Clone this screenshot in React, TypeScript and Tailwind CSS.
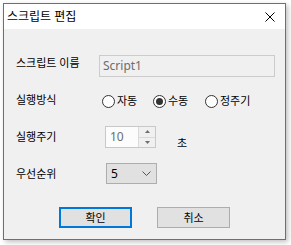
import React from "react";

function Radio({ checked, label, w }: { checked?: boolean; label: string; w: string }) {
  return (
    <div className={`flex items-center gap-[2px] ${w}`}>
      <div className="w-[13px] h-[13px] rounded-full border border-[#333333] bg-white flex items-center justify-center">
        {checked && <div className="w-[7px] h-[7px] rounded-full bg-[#333333]" />}
      </div>
      <span className="text-[11px] leading-[14px] text-black">{label}</span>
    </div>
  );
}

export default function App() {
  const font = "font-['Noto_Sans','Noto_Sans_CJK_KR',sans-serif]";
  return (
    <div className={`w-[291px] h-[245px] bg-white pt-[3px] pl-[3px] ${font}`}>
      <div className="w-[283px] h-[237px] border border-[#6f6f6f] bg-[#f0f0f0] shadow-[2px_2px_5px_rgba(0,0,0,0.25)] flex flex-col">
        {/* Title bar */}
        <div className="h-[25px] bg-white flex items-center justify-between pl-[3px] pr-[10px]">
          <span className="text-[12px] leading-[16px] text-black">스크립트 편집</span>
          <svg width="10" height="10" viewBox="0 0 10 10">
            <path d="M0.5 0.5 L9.5 9.5 M9.5 0.5 L0.5 9.5" stroke="#000" strokeWidth="1" fill="none" />
          </svg>
        </div>
        {/* Body */}
        <div className="flex flex-col pl-[12px]">
          {/* Row 1 */}
          <div className="mt-[26px] h-[22px] flex items-center">
            <span className="w-[83px] text-[11px] leading-[14px] text-black mb-[6px]">스크립트 이름</span>
            <div className="w-[176px] h-[22px] border border-[#cccccc] bg-[#f0f0f0] flex items-center pl-[3px]">
              <span className="text-[12px] leading-[14px] text-[#6d6d6d]">Script1</span>
            </div>
          </div>
          {/* Row 2 */}
          <div className="mt-[17px] h-[14px] flex items-center">
            <span className="w-[86px] text-[11px] leading-[14px] text-black -mt-[2px]">실행방식</span>
            <div className="flex items-center">
              <Radio label="자동" w="w-[51px]" />
              <Radio checked label="수동" w="w-[52px]" />
              <Radio label="정주기" w="w-[50px]" />
            </div>
          </div>
          {/* Row 3 */}
          <div className="mt-[18px] h-[22px] flex items-center">
            <span className="w-[89px] text-[11px] leading-[14px] text-black">실행주기</span>
            <div className="w-[51px] h-[22px] border border-[#c8c8c8] bg-[#fcfcfc] flex">
              <div className="flex-1 flex items-center pl-[4px]">
                <span className="text-[12px] leading-[14px] text-[#6d6d6d]">10</span>
              </div>
              <div className="w-[17px] flex flex-col border-l border-[#dadada]">
                <div className="flex-1 bg-[#f0f0f0] border-b border-[#dadada] flex items-center justify-center">
                  <svg width="5" height="3" viewBox="0 0 5 3"><path d="M0 3 L2.5 0 L5 3 Z" fill="#6d6d6d" /></svg>
                </div>
                <div className="flex-1 bg-[#f0f0f0] flex items-center justify-center">
                  <svg width="5" height="3" viewBox="0 0 5 3"><path d="M0 0 L2.5 3 L5 0 Z" fill="#6d6d6d" /></svg>
                </div>
              </div>
            </div>
            <span className="ml-[21px] mt-[12px] text-[11px] leading-[14px] text-black">초</span>
          </div>
          {/* Row 4 */}
          <div className="mt-[15px] h-[21px] flex items-center">
            <span className="w-[90px] text-[11px] leading-[14px] text-black">우선순위</span>
            <div className="w-[51px] h-[21px] border border-[#adadad] bg-[#e1e1e1] flex items-center justify-between pl-[4px] pr-[5px]">
              <span className="text-[12px] leading-[14px] text-black">5</span>
              <svg width="9" height="5" viewBox="0 0 9 5">
                <path d="M0.5 0.5 L4.5 4.5 L8.5 0.5" stroke="#555" strokeWidth="1" fill="none" />
              </svg>
            </div>
          </div>
          {/* Buttons */}
          <div className="mt-[23px] flex pl-[43px] gap-[25px]">
            <div className="w-[73px] h-[21px] border-2 border-[#0078d7] bg-[#e1e1e1] flex items-center justify-center">
              <span className="text-[11px] leading-[14px] text-black">확인</span>
            </div>
            <div className="w-[73px] h-[21px] border border-[#adadad] bg-[#e1e1e1] flex items-center justify-center">
              <span className="text-[11px] leading-[14px] text-black">취소</span>
            </div>
          </div>
        </div>
      </div>
    </div>
  );
}
